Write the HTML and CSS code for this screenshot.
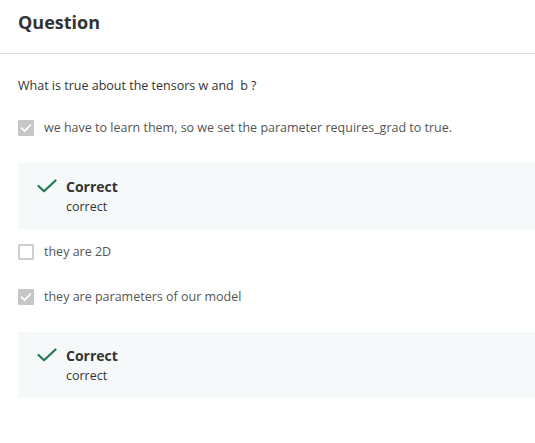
FILE: index.html
```html
<!DOCTYPE html>
<html>
<head>
<meta charset="utf-8">
<link rel="stylesheet" href="styles.css">
</head>
<body>
<div class="page">
  <header class="header">
    <h1 class="title">Question</h1>
  </header>
  <main class="content">
    <p class="prompt">What is true about the tensors w and&nbsp; b ?</p>
    <ul class="options">
      <li class="option">
        <label class="opt-row">
          <span class="box checked"><svg viewBox="0 0 16 16" width="16" height="16"><path d="M3.5 8.2 L6.6 11.2 L12.5 5" fill="none" stroke="#fff" stroke-width="1.8" stroke-linecap="round" stroke-linejoin="round"/></svg></span>
          <span class="opt-text">we have to learn them, so we set the parameter requires_grad to true.</span>
        </label>
        <div class="feedback">
          <svg class="fb-icon" viewBox="0 0 20 14" width="20" height="14"><path d="M1.5 7 L7 12.2 L18.5 1.5" fill="none" stroke="#1f7a4f" stroke-width="2.2" stroke-linecap="round" stroke-linejoin="round"/></svg>
          <div class="fb-body">
            <div class="fb-title">Correct</div>
            <div class="fb-text">correct</div>
          </div>
        </div>
      </li>
      <li class="option">
        <label class="opt-row">
          <span class="box"></span>
          <span class="opt-text">they are 2D</span>
        </label>
      </li>
      <li class="option">
        <label class="opt-row">
          <span class="box checked"><svg viewBox="0 0 16 16" width="16" height="16"><path d="M3.5 8.2 L6.6 11.2 L12.5 5" fill="none" stroke="#fff" stroke-width="1.8" stroke-linecap="round" stroke-linejoin="round"/></svg></span>
          <span class="opt-text">they are parameters of our model</span>
        </label>
        <div class="feedback">
          <svg class="fb-icon" viewBox="0 0 20 14" width="20" height="14"><path d="M1.5 7 L7 12.2 L18.5 1.5" fill="none" stroke="#1f7a4f" stroke-width="2.2" stroke-linecap="round" stroke-linejoin="round"/></svg>
          <div class="fb-body">
            <div class="fb-title">Correct</div>
            <div class="fb-text">correct</div>
          </div>
        </div>
      </li>
    </ul>
  </main>
</div>
</body>
</html>
```
FILE: styles.css
```css
* { box-sizing: border-box; }
html, body { margin: 0; padding: 0; background: #fff; }
body {
  font-family: "Open Sans", "Liberation Sans", sans-serif;
  color: #333;
}
.header {
  height: 54px;
  border-bottom: 1px solid #dcdcdc;
  padding: 9px 18px 0;
}
.title {
  margin: 0;
  font-size: 18px;
  line-height: 26px;
  font-weight: 700;
  color: #333;
}
.content {
  padding: 23px 0 0 18px;
}
.prompt {
  margin: 0;
  font-size: 12.5px;
  line-height: 18px;
  color: #333;
}
.options {
  list-style: none;
  margin: 10px 0 0;
  padding: 0;
  display: flex;
  flex-direction: column;
}
.option {
  display: flex;
  flex-direction: column;
}
.opt-row {
  display: flex;
  align-items: center;
  gap: 10px;
  padding: 15px 0 14px;
}
.box {
  width: 16px;
  height: 16px;
  border: 2px solid #cfcfcf;
  border-radius: 1px;
  flex: none;
  display: flex;
  align-items: center;
  justify-content: center;
}
.box.checked {
  background: #c6c6c6;
  border: none;
}
.opt-text {
  font-size: 12.5px;
  line-height: 16px;
  color: #555;
}
.feedback {
  margin-top: 13px;
  background: #f6f9f9;
  height: 66px;
  display: flex;
  align-items: flex-start;
  padding: 15px 0 0 19px;
  gap: 9px;
}
.fb-icon { margin-top: 1px; flex: none; }
.fb-body { display: flex; flex-direction: column; }
.fb-title {
  font-size: 14px;
  font-weight: 700;
  line-height: 18px;
  color: #333;
}
.fb-text {
  font-size: 12.5px;
  line-height: 22px;
  color: #333;
}
```
